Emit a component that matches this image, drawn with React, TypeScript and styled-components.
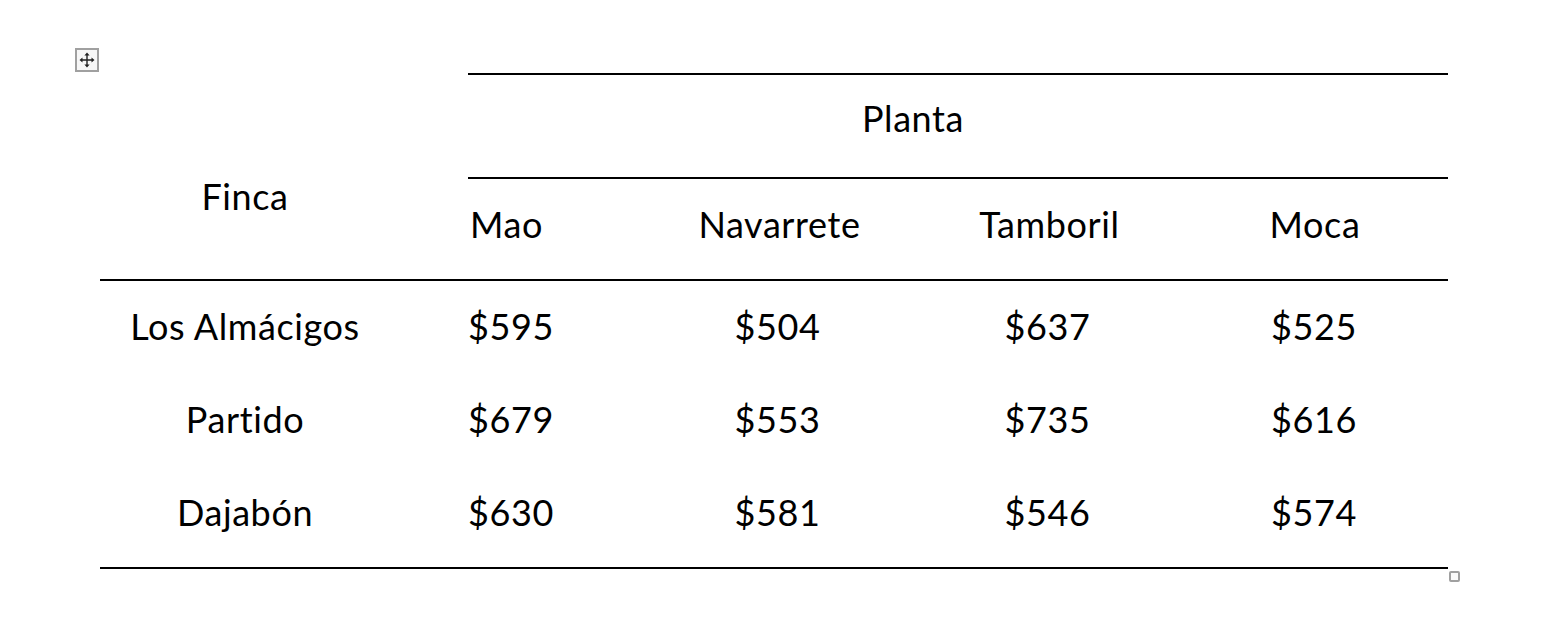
import { FC, Fragment } from "react";
import styled, { createGlobalStyle } from "styled-components";

const GlobalStyle = createGlobalStyle`
    html, body {
        margin: 0;
        padding: 0;
        background: #ffffff;
    }
    body {
        font-family: Lato, "Noto Sans", "Liberation Sans", sans-serif;
        color: #000000;
    }
`;

const Page = styled.div`
    width: 1568px;
    height: 634px;
    padding: 73px 0 0 100px;
    box-sizing: border-box;
`;

const TableWrap = styled.div`
    position: relative;
    width: 1348px;
`;

const Grid = styled.div`
    display: grid;
    grid-template-columns: 368px 172px 275px 265px 268px;
    grid-template-rows: 106px 102px 93px 93px 93px 9px;
    font-size: 36px;
    letter-spacing: 0.6px;
    line-height: 1;
`;

const Cell = styled.div<{ $align?: "left" | "center"; $shiftX?: number; $shiftY?: number }>`
    display: flex;
    align-items: center;
    justify-content: ${(p) => (p.$align === "left" ? "flex-start" : "center")};
    box-sizing: border-box;
    padding-left: ${(p) => (p.$shiftX && p.$shiftX > 0 ? p.$shiftX : 0)}px;
    padding-right: ${(p) => (p.$shiftX && p.$shiftX < 0 ? -p.$shiftX : 0)}px;
    padding-top: ${(p) => (p.$shiftY && p.$shiftY > 0 ? p.$shiftY : 0)}px;
    padding-bottom: ${(p) => (p.$shiftY && p.$shiftY < 0 ? -p.$shiftY : 0)}px;
    white-space: nowrap;
`;

const FincaCell = styled(Cell)`
    grid-column: 1;
    grid-row: 1 / 3;
    border-bottom: 2px solid #000;
`;

const PlantaCell = styled(Cell)`
    grid-column: 2 / 6;
    grid-row: 1;
    border-top: 2px solid #000;
    border-bottom: 2px solid #000;
`;

const SubHead = styled(Cell)`
    grid-row: 2;
    border-bottom: 2px solid #000;
`;

const EndRule = styled.div`
    grid-column: 1 / 6;
    grid-row: 6;
    border-bottom: 2px solid #000;
`;

const MoveHandle = styled.div`
    position: absolute;
    left: -25px;
    top: -25px;
    width: 24px;
    height: 24px;
    box-sizing: border-box;
    border: 2px solid #a0a0a0;
    background: #f7f7f7;
    display: flex;
    align-items: center;
    justify-content: center;
`;

const ResizeHandle = styled.div`
    position: absolute;
    right: -12px;
    bottom: -13px;
    width: 11px;
    height: 11px;
    box-sizing: border-box;
    border: 2px solid #a0a0a0;
    border-radius: 2px;
    background: #fafafa;
`;

const plants = ["Mao", "Navarrete", "Tamboril", "Moca"];

const rows: { finca: string; values: number[] }[] = [
    { finca: "Los Almácigos", values: [595, 504, 637, 525] },
    { finca: "Partido", values: [679, 553, 735, 616] },
    { finca: "Dajabón", values: [630, 581, 546, 574] },
];

// column tweaks so the text sits where Word put it
const colShift = [2, 4, 4, 2];

const App: FC = () => {
    return (
        <>
            <GlobalStyle />
            <Page>
                <TableWrap>
                    <MoveHandle>
                        <svg width="16" height="16" viewBox="0 0 16 16">
                            <path d="M8 2v12M2 8h12" stroke="#222" strokeWidth="1.4" />
                            <path d="M8 0.5l-2.6 3h5.2zM8 15.5l-2.6-3h5.2zM0.5 8l3-2.6v5.2zM15.5 8l-3-2.6v5.2z" fill="#222" />
                        </svg>
                    </MoveHandle>
                    <Grid>
                        <FincaCell $shiftX={-78} $shiftY={40}>Finca</FincaCell>
                        <PlantaCell $shiftX={-90} $shiftY={-16}>Planta</PlantaCell>
                        {plants.map((p, i) => (
                            <SubHead key={p} $align={i === 0 ? "left" : "center"} $shiftX={colShift[i]} $shiftY={-10}>
                                {p}
                            </SubHead>
                        ))}
                        {rows.map((r) => (
                            <Fragment key={r.finca}>
                                <Cell $shiftX={-78} $shiftY={-4}>{r.finca}</Cell>
                                {r.values.map((v, i) => (
                                    <Cell key={i} $align={i === 0 ? "left" : "center"} $shiftX={i === 0 ? 0 : 0} $shiftY={-4}>
                                        ${v}
                                    </Cell>
                                ))}
                            </Fragment>
                        ))}
                        <EndRule />
                    </Grid>
                    <ResizeHandle />
                </TableWrap>
            </Page>
        </>
    );
};

export default App;
